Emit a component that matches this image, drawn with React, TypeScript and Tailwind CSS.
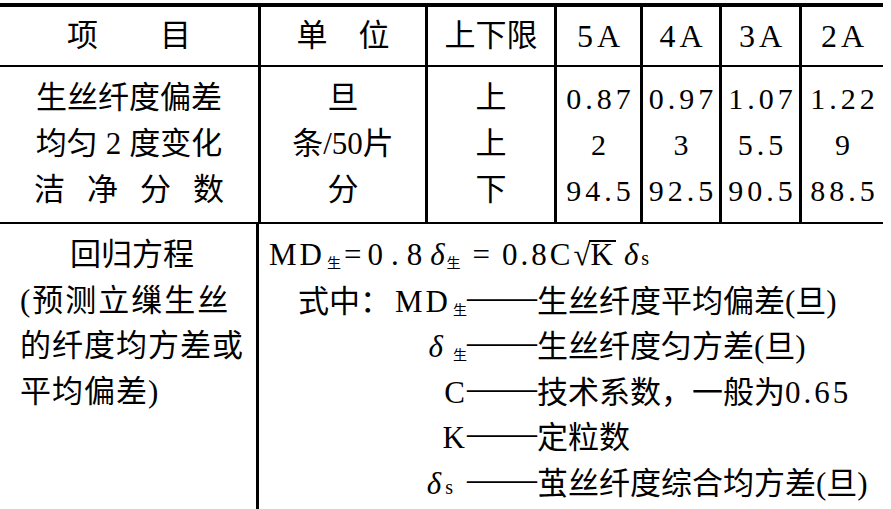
import React from 'react';

const font = "font-['Liberation_Serif','Noto_Sans_CJK_SC',serif]";
const cols = 'grid grid-cols-[258px_167px_129px_86px_79px_80px_84px]';

const rows = [
  { unit: '旦', lim: '上', vals: ['0.87', '0.97', '1.07', '1.22'] },
  { unit: '条/50片', lim: '上', vals: ['2', '3', '5.5', '9'] },
  { unit: '分', lim: '下', vals: ['94.5', '92.5', '90.5', '88.5'] },
];

const Line: React.FC<{ children: React.ReactNode; className?: string }> = ({ children, className = '' }) => (
  <div className={`h-[46px] flex items-center justify-center whitespace-nowrap ${className}`}>{children}</div>
);

const Sub: React.FC<{ children: React.ReactNode; className?: string }> = ({ children, className = '' }) => (
  <span className={`text-[14px] relative top-[3px] ${className}`}>{children}</span>
);

const Dash = () => <span className="text-[35px] relative top-[-3px]">——</span>;

const Row: React.FC<{ left: React.ReactNode; children: React.ReactNode; pr?: string }> = ({ left, children, pr = '' }) => (
  <div className="h-[45.6px] whitespace-nowrap">
    <span className={`inline-block w-[208px] text-right ${pr}`}>{left}</span>
    <Dash />
    {children}
  </div>
);

export default function App() {
  return (
    <div className={`w-[891px] h-[509px] bg-white text-black overflow-hidden pt-[3px] text-[31px] ${font}`}>
      <div className="w-[883px]">
        {/* header */}
        <div className={`${cols} h-[64px] border-t-4 border-b-2 border-black`}>
          <div className="flex items-center justify-center">项　　目</div>
          <div className="flex items-center justify-center border-l-[3px] border-black">单　位</div>
          <div className="flex items-center justify-center border-l-[3px] border-black">上下限</div>
          {['5A', '4A', '3A', '2A'].map((g) => (
            <div key={g} className="flex items-center justify-center border-l-[3px] border-black tracking-[4px] pl-[4px] text-[32px]">
              {g}
            </div>
          ))}
        </div>

        {/* data rows */}
        <div className={`${cols} border-b-2 border-black`}>
          <div className="pt-[8px] pb-[9px]">
            <Line>生丝纤度偏差</Line>
            <Line>
              均匀<span className="mx-[8px]">2</span>度变化
            </Line>
            <Line>
              <span className="w-[190px] flex justify-between">
                <span>洁</span>
                <span>净</span>
                <span>分</span>
                <span>数</span>
              </span>
            </Line>
          </div>
          <div className="pt-[8px] pb-[9px] border-l-[3px] border-black">
            {rows.map((r) => (
              <Line key={r.unit}>{r.unit}</Line>
            ))}
          </div>
          <div className="pt-[8px] pb-[9px] border-l-[3px] border-black">
            {rows.map((r, i) => (
              <Line key={i}>{r.lim}</Line>
            ))}
          </div>
          {[0, 1, 2, 3].map((c) => (
            <div key={c} className="pt-[8px] pb-[9px] border-l-[3px] border-black text-[30px] tracking-[4px]">
              {rows.map((r, i) => (
                <Line key={i} className="pl-[4px]">
                  {r.vals[c]}
                </Line>
              ))}
            </div>
          ))}
        </div>
      </div>

      {/* regression formula */}
      <div className="flex h-[285px]">
        <div className="w-[256px] pt-[8px] leading-[45.6px] whitespace-nowrap">
          <div className="pl-[70px]">回归方程</div>
          <div className="pl-[20px] tracking-[2px]">(预测立缫生丝</div>
          <div className="pl-[20px] tracking-[1px]">的纤度均方差或</div>
          <div className="pl-[20px] tracking-[1px]">平均偏差)</div>
        </div>
        <div className="flex-1 border-l-[3px] border-black pt-[8px] leading-[45.6px]">
          <div className="h-[45.6px] pl-[10px] whitespace-nowrap">
            <span className="tracking-[3px]">MD</span>
            <Sub className="ml-[2px]">生</Sub>
            <span className="ml-[3px]">=</span>
            <span className="tracking-[8px] ml-[6px]">0.8</span>
            <span className="italic">δ</span>
            <Sub className="ml-[2px]">生</Sub>
            <span className="mx-[12px]">=</span>
            <span className="tracking-[3px]">0.8C</span>
            <span>√</span>
            <span className="inline-block ml-[-2px] pl-[2px] border-t-2 border-black leading-[26px] pr-[3px]">K</span>
            <span className="italic ml-[8px]">δ</span>
            <span className="text-[20px] ml-[3px]">s</span>
          </div>
          <Row
            left={
              <>
                <span>式中：</span>
                <span className="tracking-[3px] ml-[4px]">MD</span>
                <Sub className="ml-[2px]">生</Sub>
              </>
            }
          >
            <span>生丝纤度平均偏差(旦)</span>
          </Row>
          <Row
            left={
              <>
                <span className="italic">δ</span>
                <Sub className="ml-[10px]">生</Sub>
              </>
            }
          >
            <span>生丝纤度匀方差(旦)</span>
          </Row>
          <Row left={<span className="mr-[2px]">C</span>}>
            <span>技术系数，一般为</span>
            <span className="tracking-[3px]">0.65</span>
          </Row>
          <Row left={<span className="mr-[2px]">K</span>}>
            <span>定粒数</span>
          </Row>
          <Row
            pr="pr-[14px]"
            left={
              <>
                <span className="italic">δ</span>
                <span className="text-[20px] ml-[4px]">s</span>
              </>
            }
          >
            <span>茧丝纤度综合均方差(旦)</span>
          </Row>
        </div>
      </div>
    </div>
  );
}
